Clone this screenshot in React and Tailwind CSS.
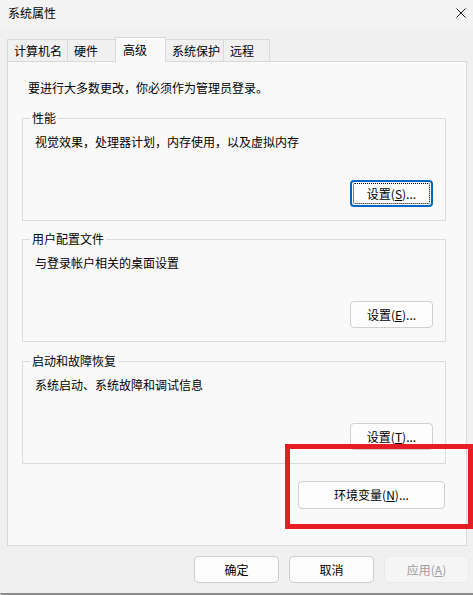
import React from "react";

const FONT = { fontFamily: '"Microsoft YaHei UI", "Noto Sans CJK SC", "Noto Sans", sans-serif' };

function Tab({ label, width, active }) {
  if (active) {
    return (
      <div
        className={`relative z-10 -ml-px -mb-px flex h-[25px] items-center border border-b-0 border-[#d9d9d9] bg-[#f9f9f9] pl-[7px] ${width}`}
      >
        {label}
      </div>
    );
  }
  return (
    <div
      className={`-ml-px flex h-[22px] items-center border border-b-0 border-[#d9d9d9] bg-[#f0f0f0] pl-[6px] first:ml-0 ${width}`}
    >
      {label}
    </div>
  );
}

function Btn({ children, w = "w-[83px]", focused, disabled }) {
  if (focused) {
    return (
      <button className={`relative flex h-[27px] items-center justify-center rounded-[4px] border-2 border-[#0067c0] bg-[#fdfdfd] ${w}`}>
        <span className="absolute inset-[1px] rounded-[2px] border border-dotted border-black" />
        <span>{children}</span>
      </button>
    );
  }
  if (disabled) {
    return (
      <button className={`flex h-[27px] items-center justify-center rounded-[4px] border border-[#ebebeb] bg-[#f5f5f5] text-[#9d9d9d] ${w}`}>
        {children}
      </button>
    );
  }
  return (
    <button className={`flex h-[27px] items-center justify-center rounded-[4px] border border-[#d0d0d0] bg-[#fdfdfd] ${w}`}>
      {children}
    </button>
  );
}

function Group({ title, desc, button, focused, className }) {
  return (
    <div className={`relative ml-[14px] h-[103px] w-[424px] border border-[#dcdcdc] ${className}`}>
      <span className="absolute left-[7px] top-[-9px] bg-[#f9f9f9] px-[2px] leading-[16px]">{title}</span>
      <div className="pl-[12px] pt-[15px] leading-[16px]">{desc}</div>
      <div className="mt-[30px] flex justify-end pr-[12px]">
        <Btn focused={focused}>{button}</Btn>
      </div>
    </div>
  );
}

export default function App() {
  return (
    <div
      className="relative flex h-[595px] w-[473px] flex-col overflow-hidden bg-[#f0f0f0] text-[12px] leading-[16px] text-black"
      style={FONT}
    >
      {/* title bar */}
      <div className="flex h-[28px] items-center justify-between bg-[#f3f3f3] pl-[8px] pr-[7px]">
        <span className="-mt-[3px]">系统属性</span>
        <svg width="10" height="10" viewBox="0 0 10 10" className="-mt-[3px]">
          <path d="M0.5 0.5 L9.5 9.5 M9.5 0.5 L0.5 9.5" stroke="#1a1a1a" strokeWidth="1" fill="none" />
        </svg>
      </div>

      {/* tabs */}
      <div className="flex h-[33px] items-end pl-[7px]">
        <Tab label="计算机名" width="w-[61px]" />
        <Tab label="硬件" width="w-[49px]" />
        <Tab label="高级" width="w-[51px]" active />
        <Tab label="系统保护" width="w-[59px]" />
        <Tab label="远程" width="w-[47px]" />
      </div>

      {/* panel */}
      <div className="ml-[7px] h-[485px] w-[460px] border border-[#d9d9d9] bg-[#f9f9f9]">
        <div className="pl-[20px] pt-[18px]">要进行大多数更改，你必须作为管理员登录。</div>

        <Group
          className="mt-[22px]"
          title="性能"
          desc="视觉效果，处理器计划，内存使用，以及虚拟内存"
          focused
          button={
            <>
              设置(<span className="underline">S</span>)...
            </>
          }
        />
        <Group
          className="mt-[18px]"
          title="用户配置文件"
          desc="与登录帐户相关的桌面设置"
          button={
            <>
              设置(<span className="underline">E</span>)...
            </>
          }
        />
        <Group
          className="mt-[19px]"
          title="启动和故障恢复"
          desc="系统启动、系统故障和调试信息"
          button={
            <>
              设置(<span className="underline">T</span>)...
            </>
          }
        />

        <div className="mt-[17px] flex justify-end pr-[21px]">
          <Btn w="w-[147px] h-[28px]">
            环境变量(<span className="underline">N</span>)...
          </Btn>
        </div>
      </div>

      {/* footer buttons */}
      <div className="mt-[10px] flex justify-end gap-[10px] pr-[4px]">
        <Btn w="w-[85px]">确定</Btn>
        <Btn w="w-[85px]">取消</Btn>
        <Btn w="w-[85px]" disabled>
          应用(<span className="underline">A</span>)
        </Btn>
      </div>

      <div className="mt-auto h-[2px] rounded-bl-[4px] bg-[#8c8c8c]" />

      {/* red annotation box */}
      <div className="pointer-events-none absolute left-[285px] top-[444px] h-[85px] w-[188px] border-[5px] border-[#e81c24]" />
    </div>
  );
}
